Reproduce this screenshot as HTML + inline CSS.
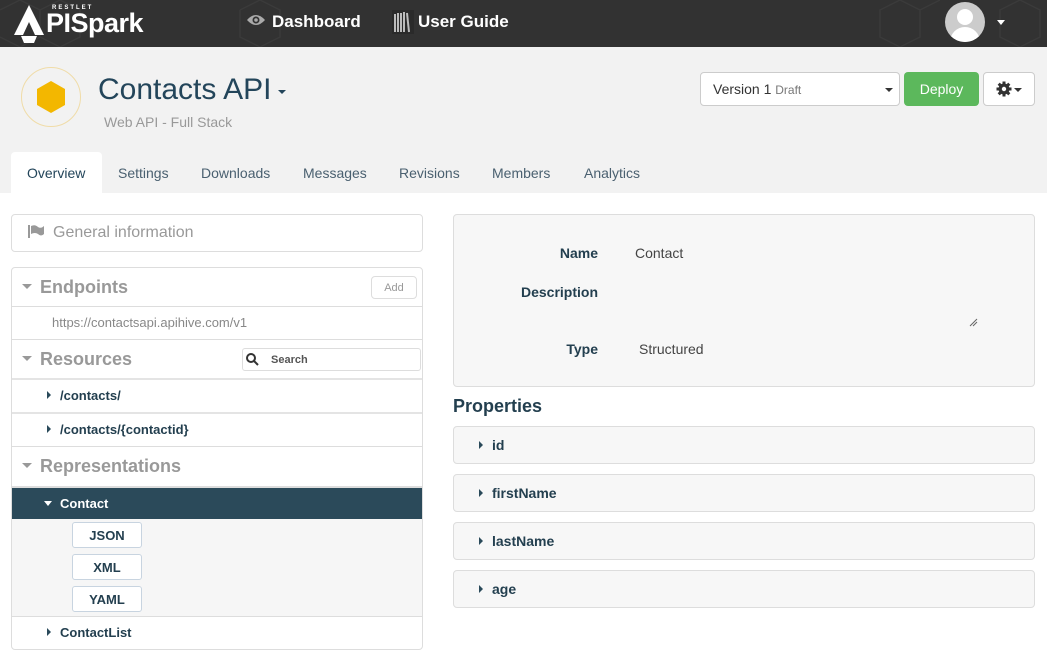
<!DOCTYPE html>
<html><head><style>
*{box-sizing:border-box;margin:0;padding:0}
body{width:1047px;height:655px;overflow:hidden;font-family:"Liberation Sans",sans-serif;background:#fff;position:relative;color:#2a4a5a}
.a{position:absolute}
.hdr{left:0;top:0;width:1047px;height:47px;background:#323232}
.top{left:0;top:47px;width:1047px;height:146px;background:#f2f2f2}
.tab{top:153px;height:41px;line-height:41px;font-size:14px;color:#4a6070}
.box{border:1px solid #ddd;border-radius:4px}
.row{left:12px;width:410px;border-top:1px solid #ddd}
.tri{display:inline-block;width:0;height:0;border-left:4px solid #2a4a5a;border-top:4px solid transparent;border-bottom:4px solid transparent;margin-right:9px;vertical-align:1px}
.dn{display:inline-block;width:0;height:0;border-top:5px solid #999;border-left:5px solid transparent;border-right:5px solid transparent;margin-right:8px;vertical-align:4px}
.sec{font-size:18px;font-weight:bold;color:#999}
.it{font-size:13px;font-weight:bold;color:#233f4f}
.fmt{left:72px;width:70px;height:26px;border:1px solid #c8d4e0;border-radius:3px;background:#fff;text-align:center;line-height:25px;font-size:13px;font-weight:bold;color:#233f4f}
.prop{left:453px;width:582px;height:38px;background:#f7f7f7;border:1px solid #ddd;border-radius:4px;line-height:36px;padding-left:25px;font-size:14px;font-weight:bold;color:#233f4f}
.lbl{font-size:14px;font-weight:bold;color:#233f4f;text-align:right;width:200px;left:398px}
.val{font-size:14px;color:#444}
</style></head><body>
<div class="a hdr">
<svg class="a" style="left:0;top:0" width="1047" height="47"><g stroke="#3a3a3a" fill="none" stroke-width="1.5">
<path d="M0 10 L20 0 M20 0 L40 10 L40 37 L20 47 L0 37 M40 10 L60 0 L80 10 L80 37 L60 47 L40 37 M240 10 L260 0 L280 10 L280 37 L260 47 L240 37 L240 10 M880 10 L900 0 L920 10 L920 37 L900 47 L880 37Z M920 10 L940 0 M1000 10 L1020 0 L1040 10 L1040 37 L1020 47 L1000 37Z"/>
</g></svg>
<svg class="a" style="left:13px;top:5px" width="32" height="38" viewBox="0 0 32 38"><path d="M16 0 L31 30 L22 30 L16 17 L10 30 L1 30 Z" fill="#fff"/><path d="M8 31 L24 31 L21 38 L11 38 Z" fill="#fff"/></svg>
<div class="a" style="left:52px;top:5px;font-size:6px;font-weight:bold;color:#fff;letter-spacing:2px">RESTLET</div>
<div class="a" style="left:46px;top:8px;font-size:27px;font-weight:bold;color:#fff;letter-spacing:-0.5px">PISpark</div>
<svg class="a" style="left:246px;top:13px" width="20" height="14" viewBox="0 0 20 14"><path d="M1 7 Q10 -3 19 7 Q10 17 1 7Z" fill="#aaa"/><circle cx="10" cy="7" r="3.5" fill="#323232"/><circle cx="10" cy="7" r="1.8" fill="#aaa"/></svg>
<div class="a" style="left:272px;top:12px;font-size:17px;font-weight:bold;color:#fff">Dashboard</div>
<svg class="a" style="left:392px;top:10px" width="22" height="24"><rect x="0" y="0" width="22" height="24" fill="#2a2a2a"/><path d="M3 4 L3 22 M6 3 L6 22 M9 3 L9 22 M12 2 L12 22 M15 3 L17 22" stroke="#bbb" stroke-width="2"/></svg>
<div class="a" style="left:418px;top:12px;font-size:17px;font-weight:bold;color:#fff">User Guide</div>
<div class="a" style="left:945px;top:2px;width:40px;height:40px;border-radius:50%;background:#ccc;overflow:hidden"><div class="a" style="left:12px;top:7px;width:16px;height:16px;border-radius:50%;background:#fff"></div><div class="a" style="left:5px;top:25px;width:30px;height:22px;border-radius:15px 15px 0 0;background:#fff"></div></div>
<div class="a" style="left:997px;top:20px;border-top:5px solid #fff;border-left:4px solid transparent;border-right:4px solid transparent"></div>
</div>
<div class="a top"></div>
<div class="a" style="left:21px;top:67px;width:60px;height:60px;border-radius:50%;border:1px solid #f0dca8"></div>
<svg class="a" style="left:36px;top:80px" width="30" height="34" viewBox="0 0 30 34"><path d="M15 1 L29 9 L29 25 L15 33 L1 25 L1 9Z" fill="#f3b700"/></svg>
<div class="a" style="left:98px;top:73px;font-size:30px;color:#23455a">Contacts API</div>
<div class="a" style="left:278px;top:90px;border-top:4px solid #23455a;border-left:4px solid transparent;border-right:4px solid transparent"></div>
<div class="a" style="left:104px;top:114px;font-size:14px;color:#999">Web API - Full Stack</div>
<div class="a" style="left:700px;top:72px;width:200px;height:34px;background:#fff;border:1px solid #ccc;border-radius:4px;line-height:32px;padding-left:12px;font-size:14px;color:#333">Version 1 <span style="font-size:12px;color:#777">Draft</span></div>
<div class="a" style="left:885px;top:88px;border-top:4px solid #333;border-left:4px solid transparent;border-right:4px solid transparent"></div>
<div class="a" style="left:904px;top:72px;width:75px;height:34px;background:#5cb85c;border-radius:4px;color:#fff;text-align:center;line-height:34px;font-size:14px">Deploy</div>
<div class="a" style="left:983px;top:72px;width:52px;height:34px;background:#fff;border:1px solid #ccc;border-radius:4px"></div>
<svg class="a" style="left:996px;top:81px" width="16" height="16" viewBox="0 0 16 16"><g fill="#333"><circle cx="8" cy="8" r="5.5"/><rect x="6.5" y="0.5" width="3" height="15"/><rect x="0.5" y="6.5" width="15" height="3"/><rect x="6.5" y="0.5" width="3" height="15" transform="rotate(45 8 8)"/><rect x="6.5" y="0.5" width="3" height="15" transform="rotate(-45 8 8)"/></g><circle cx="8" cy="8" r="2.2" fill="#fff"/></svg>
<div class="a" style="left:1014px;top:88px;border-top:4px solid #333;border-left:4px solid transparent;border-right:4px solid transparent"></div>
<div class="a" style="left:11px;top:152px;width:91px;height:41px;background:#fff;border-radius:4px 4px 0 0"></div>
<div class="a tab" style="left:27px;color:#23455a">Overview</div>
<div class="a tab" style="left:118px">Settings</div>
<div class="a tab" style="left:201px">Downloads</div>
<div class="a tab" style="left:303px">Messages</div>
<div class="a tab" style="left:399px">Revisions</div>
<div class="a tab" style="left:492px">Members</div>
<div class="a tab" style="left:584px">Analytics</div>

<div class="a box" style="left:11px;top:214px;width:412px;height:38px"></div>
<svg class="a" style="left:28px;top:225px" width="16" height="13"><rect x="0" y="0" width="2" height="13" fill="#999"/><path d="M3 1 Q7 -1 10 2 Q13 4 16 1 L16 9 Q13 12 10 9 Q7 7 3 9Z" fill="#999"/></svg>
<div class="a" style="left:53px;top:224px;font-size:16px;color:#999">General information</div>

<div class="a box" style="left:11px;top:267px;width:412px;height:383px"></div>
<div class="a sec" style="left:22px;top:277px"><span class="dn"></span>Endpoints</div>
<div class="a" style="left:371px;top:276px;width:46px;height:23px;border:1px solid #ddd;border-radius:4px;font-size:11px;color:#999;text-align:center;line-height:23px">Add</div>
<div class="a row" style="top:306px"></div>
<div class="a" style="left:52px;top:315px;font-size:13px;color:#888">https://contactsapi.apihive.com/v1</div>
<div class="a row" style="top:339px"></div>
<div class="a sec" style="left:22px;top:349px"><span class="dn"></span>Resources</div>
<div class="a" style="left:242px;top:348px;width:179px;height:23px;border:1px solid #ddd;border-radius:3px;background:#fff"></div>
<svg class="a" style="left:246px;top:353px" width="13" height="13"><circle cx="5" cy="5" r="4" stroke="#333" stroke-width="2" fill="none"/><path d="M8 8 L12 12" stroke="#333" stroke-width="2"/></svg>
<div class="a" style="left:271px;top:354px;font-size:11px;font-weight:bold;color:#555">Search</div>
<div class="a row" style="top:378px;border-top:2px solid #e4e4e4"></div>
<div class="a it" style="left:47px;top:388px"><span class="tri"></span>/contacts/</div>
<div class="a row" style="top:412px;border-top:2px solid #e4e4e4"></div>
<div class="a it" style="left:47px;top:422px"><span class="tri"></span>/contacts/{contactid}</div>
<div class="a row" style="top:446px"></div>
<div class="a sec" style="left:22px;top:456px"><span class="dn"></span>Representations</div>
<div class="a" style="left:12px;top:486px;width:410px;height:2px;background:#ddd"></div>
<div class="a" style="left:12px;top:488px;width:410px;height:31px;background:#2b4a5a"></div>
<div class="a it" style="left:44px;top:496px;color:#fff"><span class="dn" style="border-top-color:#fff;border-left-width:4px;border-right-width:4px;margin-right:8px;vertical-align:2px"></span>Contact</div>
<div class="a" style="left:12px;top:519px;width:410px;height:97px;background:#f6f6f6"></div>
<div class="a fmt" style="top:522px">JSON</div>
<div class="a fmt" style="top:554px">XML</div>
<div class="a fmt" style="top:586px">YAML</div>
<div class="a row" style="top:616px"></div>
<div class="a it" style="left:47px;top:625px"><span class="tri"></span>ContactList</div>

<div class="a box" style="left:453px;top:214px;width:582px;height:173px;background:#f7f7f7"></div>
<div class="a lbl" style="top:245px">Name</div>
<div class="a val" style="left:635px;top:245px">Contact</div>
<div class="a lbl" style="top:284px">Description</div>
<svg class="a" style="left:969px;top:318px" width="9" height="9"><path d="M1 8 L8 1 M4 8 L8 4" stroke="#666"/></svg>
<div class="a lbl" style="top:341px">Type</div>
<div class="a val" style="left:639px;top:341px">Structured</div>
<div class="a" style="left:453px;top:396px;font-size:18px;font-weight:bold;color:#233f4f">Properties</div>
<div class="a prop" style="top:426px"><span class="tri"></span>id</div>
<div class="a prop" style="top:474px"><span class="tri"></span>firstName</div>
<div class="a prop" style="top:522px"><span class="tri"></span>lastName</div>
<div class="a prop" style="top:570px"><span class="tri"></span>age</div>
</body></html>
